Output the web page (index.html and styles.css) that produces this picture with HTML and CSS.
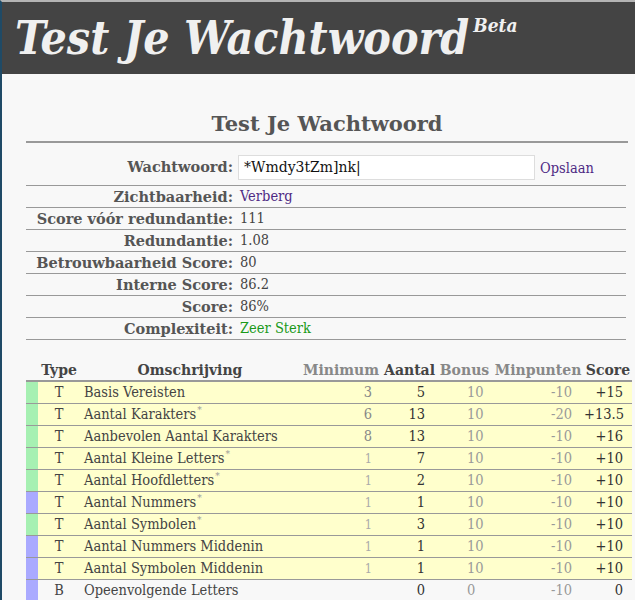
FILE: index.html
```html
<!DOCTYPE html>
<html lang="nl">
<head>
<meta charset="utf-8">
<title>Test Je Wachtwoord</title>
<link rel="stylesheet" href="styles.css">
</head>
<body>
<div class="page">
  <header class="masthead">
    <h1 class="site-title">Test Je Wachtwoord<sup class="beta">Beta</sup></h1>
  </header>
  <main class="content">
    <h2 class="section-title">Test Je Wachtwoord</h2>
    <table class="summary">
      <tr class="pw-row">
        <th>Wachtwoord:</th>
        <td><span class="pw-box">*Wmdy3tZm]nk|</span><a class="link save">Opslaan</a></td>
      </tr>
      <tr><th>Zichtbaarheid:</th><td><a class="link">Verberg</a></td></tr>
      <tr><th>Score vóór redundantie:</th><td>111</td></tr>
      <tr><th>Redundantie:</th><td>1.08</td></tr>
      <tr><th>Betrouwbaarheid Score:</th><td>80</td></tr>
      <tr><th>Interne Score:</th><td>86.2</td></tr>
      <tr><th>Score:</th><td>86%</td></tr>
      <tr><th>Complexiteit:</th><td class="strong">Zeer Sterk</td></tr>
    </table>

    <table class="details">
      <colgroup>
        <col class="w-strip">
        <col class="w-type">
        <col class="w-desc">
        <col class="w-min">
        <col class="w-cnt">
        <col class="w-bonus">
        <col class="w-pen">
        <col class="w-score">
      </colgroup>
      <thead>
        <tr>
          <th></th>
          <th>Type</th>
          <th>Omschrijving</th>
          <th class="muted">Minimum</th>
          <th>Aantal</th>
          <th class="muted">Bonus</th>
          <th class="muted">Minpunten</th>
          <th>Score</th>
        </tr>
      </thead>
      <tbody>
        <tr class="ok"><td class="c-strip"></td><td class="c-type">T</td><td class="c-desc">Basis Vereisten</td><td class="c-min">3</td><td class="c-cnt">5</td><td class="c-bonus">10</td><td class="c-pen">-10</td><td class="c-score">+15</td></tr>
        <tr class="ok"><td class="c-strip"></td><td class="c-type">T</td><td class="c-desc">Aantal Karakters<sup>*</sup></td><td class="c-min">6</td><td class="c-cnt">13</td><td class="c-bonus">10</td><td class="c-pen">-20</td><td class="c-score">+13.5</td></tr>
        <tr class="ok"><td class="c-strip"></td><td class="c-type">T</td><td class="c-desc">Aanbevolen Aantal Karakters</td><td class="c-min">8</td><td class="c-cnt">13</td><td class="c-bonus">10</td><td class="c-pen">-10</td><td class="c-score">+16</td></tr>
        <tr class="ok"><td class="c-strip"></td><td class="c-type">T</td><td class="c-desc">Aantal Kleine Letters<sup>*</sup></td><td class="c-min small">1</td><td class="c-cnt">7</td><td class="c-bonus">10</td><td class="c-pen">-10</td><td class="c-score">+10</td></tr>
        <tr class="ok"><td class="c-strip"></td><td class="c-type">T</td><td class="c-desc">Aantal Hoofdletters<sup>*</sup></td><td class="c-min small">1</td><td class="c-cnt">2</td><td class="c-bonus">10</td><td class="c-pen">-10</td><td class="c-score">+10</td></tr>
        <tr class="warn"><td class="c-strip"></td><td class="c-type">T</td><td class="c-desc">Aantal Nummers<sup>*</sup></td><td class="c-min small">1</td><td class="c-cnt">1</td><td class="c-bonus">10</td><td class="c-pen">-10</td><td class="c-score">+10</td></tr>
        <tr class="ok"><td class="c-strip"></td><td class="c-type">T</td><td class="c-desc">Aantal Symbolen<sup>*</sup></td><td class="c-min small">1</td><td class="c-cnt">3</td><td class="c-bonus">10</td><td class="c-pen">-10</td><td class="c-score">+10</td></tr>
        <tr class="warn"><td class="c-strip"></td><td class="c-type">T</td><td class="c-desc">Aantal Nummers Middenin</td><td class="c-min small">1</td><td class="c-cnt">1</td><td class="c-bonus">10</td><td class="c-pen">-10</td><td class="c-score">+10</td></tr>
        <tr class="warn"><td class="c-strip"></td><td class="c-type">T</td><td class="c-desc">Aantal Symbolen Middenin</td><td class="c-min small">1</td><td class="c-cnt">1</td><td class="c-bonus">10</td><td class="c-pen">-10</td><td class="c-score">+10</td></tr>
        <tr class="warn plain"><td class="c-strip"></td><td class="c-type">B</td><td class="c-desc">Opeenvolgende Letters</td><td class="c-min"></td><td class="c-cnt">0</td><td class="c-bonus">0</td><td class="c-pen">-10</td><td class="c-score">0</td></tr>
      </tbody>
    </table>
  </main>
</div>
</body>
</html>
```

FILE: styles.css
```css
html, body {
  margin: 0;
  padding: 0;
  background: #f8f8f8;
}

body {
  font-family: "DejaVu Serif Condensed", "DejaVu Serif", serif;
  color: #444;
  font-size: 14.5px;
}

.page {
  border-top: 2px solid #b4b4b4;
  border-left: 2px solid #1f4a66;
  min-height: 600px;
  box-sizing: border-box;
}

.masthead {
  background: #444;
  height: 72px;
  padding-left: 13px;
  overflow: hidden;
  white-space: nowrap;
}

.site-title {
  margin: 0;
  font-family: "DejaVu Serif Condensed", "DejaVu Serif", serif;
  font-style: italic;
  font-weight: bold;
  font-size: 46px;
  line-height: 72px;
  color: #f0f0f0;
}

.beta {
  font-size: 19px;
  vertical-align: 0;
  position: relative;
  top: -22px;
  margin-left: 4px;
}

.content {
  padding: 37px 7px 0 24px;
}

.section-title {
  margin: 0;
  text-align: center;
  font-family: "DejaVu Serif", serif;
  font-size: 21px;
  color: #555;
  line-height: 26px;
  padding-bottom: 4px;
  border-bottom: 2px solid #999;
}

.summary {
  width: 600px;
  border-collapse: collapse;
}

.summary th,
.summary td {
  border-bottom: 1px solid #999;
  height: 21px;
  padding: 0;
  line-height: 21px;
  vertical-align: middle;
}

.summary th {
  width: 207px;
  text-align: right;
  padding-right: 7px;
  font-family: "DejaVu Serif", serif;
  font-size: 14.5px;
  color: #555;
  white-space: nowrap;
}

.summary .pw-row th,
.summary .pw-row td {
  height: 38px;
  padding-top: 4px;
}

.pw-box {
  display: inline-block;
  box-sizing: border-box;
  width: 297px;
  height: 25px;
  line-height: 23px;
  border: 1px solid #dddddd;
  background: #fff;
  padding-left: 5px;
  font-family: "DejaVu Serif", serif;
  font-size: 14px;
  color: #111;
  vertical-align: middle;
  margin-top: 2px;
  margin-left: -2px;
}

.link {
  color: #4e2a84;
}

.save {
  margin-left: 5px;
  vertical-align: middle;
  position: relative;
  top: 2px;
}

.strong {
  color: #1a9a1a;
}

.details {
  margin-top: 21px;
  width: 606px;
  border-collapse: collapse;
  table-layout: fixed;
}

.w-strip { width: 12px; }
.w-type { width: 42px; }
.w-desc { width: 220px; }
.w-min { width: 82px; }
.w-cnt { width: 55px; }
.w-bonus { width: 55px; }
.w-pen { width: 92px; }
.w-score { width: 48px; }

.details th {
  font-family: "DejaVu Serif", serif;
  font-size: 14px;
  line-height: 18px;
  padding: 0 0 1px;
  text-align: center;
  border-bottom: 2px solid #999;
  color: #444;
  white-space: nowrap;
  overflow: visible;
}

.details th.muted {
  color: #888;
}

.details td {
  height: 21px;
  padding: 0;
  line-height: 21px;
  border-bottom: 1px solid #999;
  white-space: nowrap;
}

.details tbody tr {
  background: #ffffcc;
}

.details tbody tr.plain {
  background: #f8f8f8;
}

.details tr.ok td.c-strip { background: #a6f0b2; }
.details tr.warn td.c-strip { background: #aaaaff; }

.c-type { text-align: center; }
.c-desc { text-align: left; padding-left: 4px !important; }
.c-min { text-align: right; padding-right: 10px !important; color: #888; }
.c-cnt { text-align: right; padding-right: 12px !important; color: #333; }
.c-bonus { text-align: left; padding-left: 30px !important; color: #999; }
.c-pen { text-align: right; padding-right: 12px !important; color: #999; }
.c-score { text-align: right; padding-right: 9px !important; color: #333; }

.details td.small { color: #aaa; font-size: 12.5px; }

.details sup {
  color: #999;
  font-size: 10px;
  line-height: 0;
  margin-left: 1px;
}
```
